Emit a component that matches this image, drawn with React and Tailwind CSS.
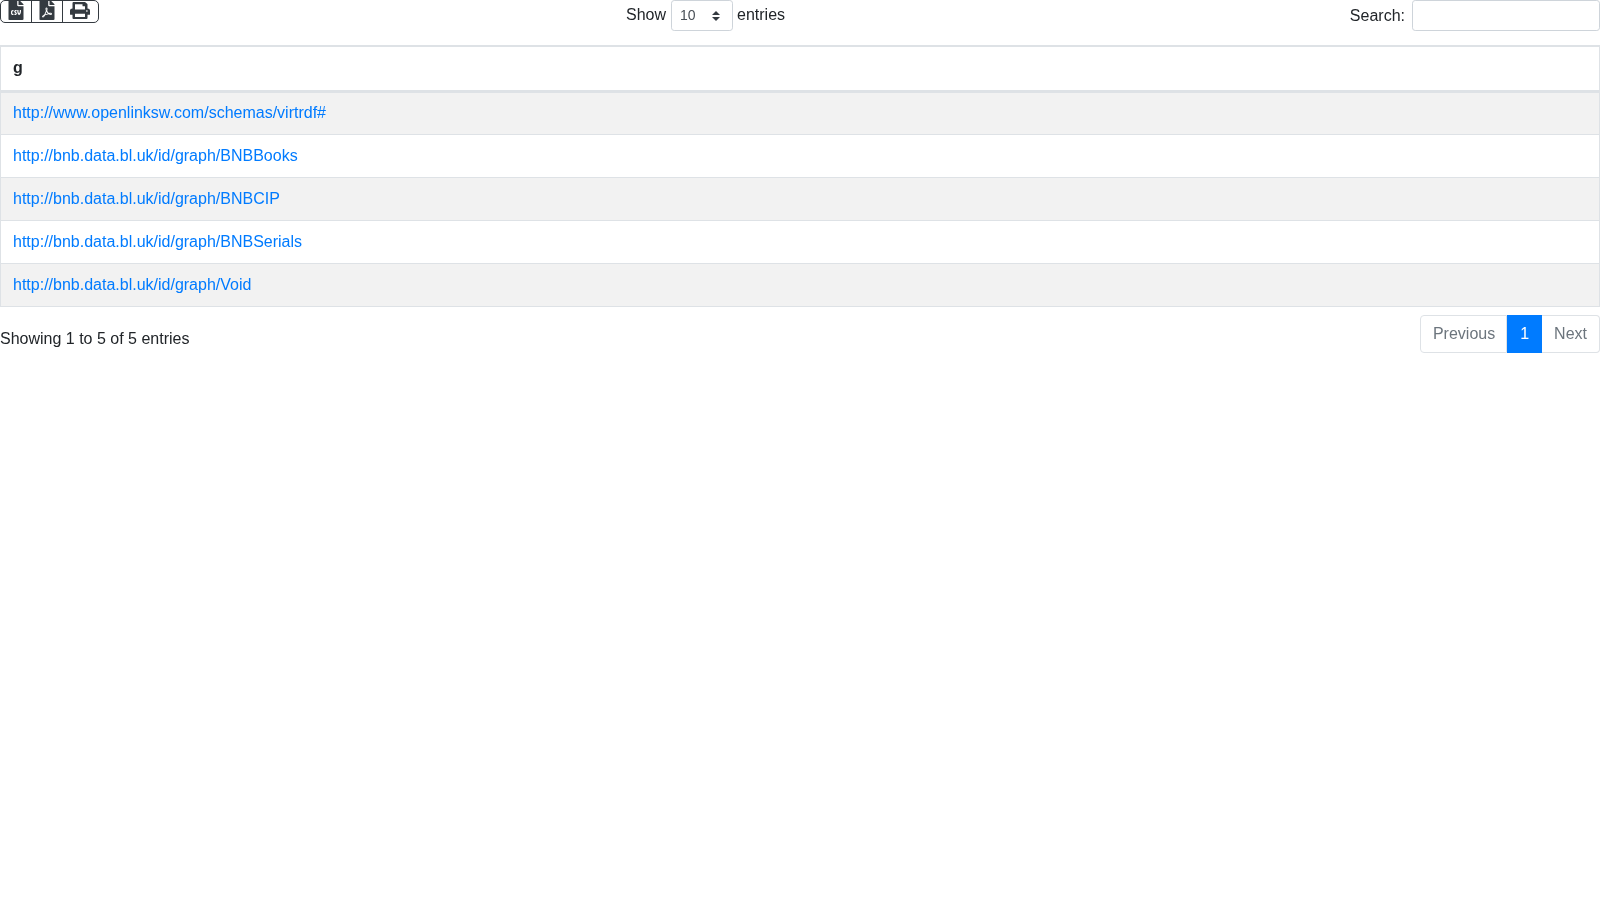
import { FaFileCsv, FaFilePdf, FaPrint } from 'react-icons/fa';

const graphs = [
  'http://www.openlinksw.com/schemas/virtrdf#',
  'http://bnb.data.bl.uk/id/graph/BNBBooks',
  'http://bnb.data.bl.uk/id/graph/BNBCIP',
  'http://bnb.data.bl.uk/id/graph/BNBSerials',
  'http://bnb.data.bl.uk/id/graph/Void',
];

const App = () => {
  return (
    <div className="min-h-[900px] font-['Liberation_Sans',sans-serif] text-base leading-6 text-[#212529] [will-change:opacity]">
      {/* toolbar */}
      <div className="flex h-[45px] items-start">
        <div className="w-[626px]">
          <div className="flex h-[23px] w-[99px] rounded-[5px] border border-[#343a40] text-[#343a40]">
            <span className="flex w-[31px] items-start justify-center border-r border-[#343a40] text-[20px]">
              <FaFileCsv className="-mt-px" />
            </span>
            <span className="flex w-[31px] items-start justify-center border-r border-[#343a40] text-[20px]">
              <FaFilePdf className="-mt-px" />
            </span>
            <span className="flex flex-1 items-start justify-center pr-[2px]">
              <FaPrint className="mt-px h-[17px] w-[20px]" preserveAspectRatio="none" />
            </span>
          </div>
        </div>
        <div className="flex items-center">
          <span className="pb-[2px]">Show</span>
          <div className="ml-[5px] mr-[4px] flex h-[31px] w-[62px] items-center justify-between rounded-[3.2px] border border-[#ced4da] pl-[8px] pr-[12px] text-sm text-[#495057]">
            <span className="pb-px">10</span>
            <svg width="8" height="10" viewBox="0 0 8 10" fill="#343a40">
              <path d="M4 0 8 4H0z" />
              <path d="M4 10 0 6h8z" />
            </svg>
          </div>
          <span className="pb-[2px]">entries</span>
        </div>
        <div className="ml-auto flex items-center">
          <span>Search:</span>
          <input
            type="search"
            className="ml-[7px] h-[31px] w-[188px] rounded-[3.2px] border border-[#ced4da] bg-white"
          />
        </div>
      </div>

      {/* table */}
      <table className="w-full border-collapse border border-[#dee2e6]">
        <thead>
          <tr>
            <th className="h-[45px] border border-t-2 border-b-[3px] border-[#dee2e6] px-3 text-left font-bold">g</th>
          </tr>
        </thead>
        <tbody>
          {graphs.map((graph, i) => (
            <tr key={graph} className={i % 2 === 0 ? 'bg-[#f2f2f2]' : 'bg-white'}>
              <td className="h-[43px] border border-[#dee2e6] px-3">
                <a href="#" className="text-[#007bff]">
                  {graph}
                </a>
              </td>
            </tr>
          ))}
        </tbody>
      </table>

      {/* footer */}
      <div className="mt-2 flex items-start justify-between">
        <div className="pt-[12px]">Showing 1 to 5 of 5 entries</div>
        <div className="flex h-[38px]">
          <span className="flex items-center rounded-l-[4px] border border-[#dee2e6] pl-3 pr-[11px] text-[#6c757d]">Previous</span>
          <span className="flex items-center border border-[#007bff] bg-[#007bff] px-3 text-white">1</span>
          <span className="flex items-center rounded-r-[4px] border border-l-0 border-[#dee2e6] px-3 text-[#6c757d]">Next</span>
        </div>
      </div>
    </div>
  );
};

export default App;
